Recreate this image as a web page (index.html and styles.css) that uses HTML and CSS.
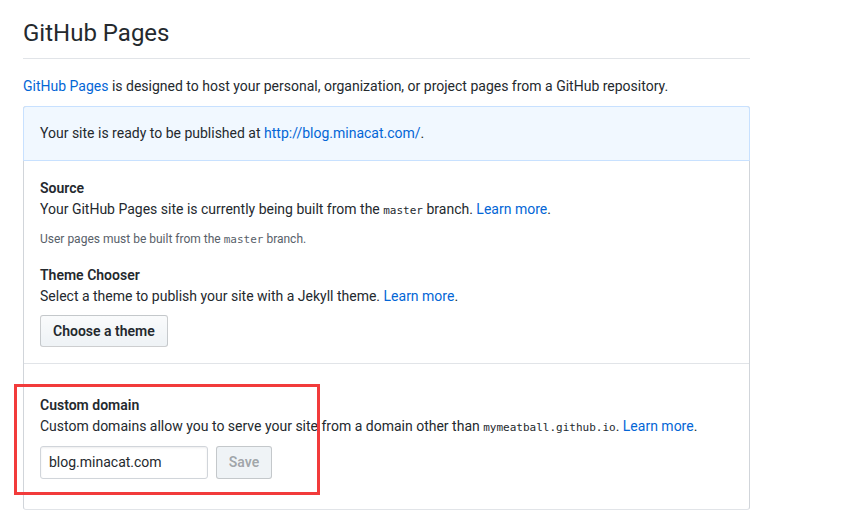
FILE: index.html
```html
<!DOCTYPE html>
<html>
<head>
<meta charset="utf-8">
<link rel="stylesheet" href="styles.css">
</head>
<body>
<div class="page">
  <div class="subhead">
    <h2 class="subhead-title">GitHub Pages</h2>
  </div>
  <p class="intro"><a href="#">GitHub Pages</a> is designed to host your personal, organization, or project pages from a GitHub repository.</p>
  <div class="box">
    <div class="flash">Your site is ready to be published at <a href="#">http://blog.minacat.com/</a>.</div>
    <div class="row">
      <h4 class="label">Source</h4>
      <p class="desc">Your GitHub Pages site is currently being built from the <code>master</code> branch. <a href="#">Learn more</a>.</p>
      <p class="note">User pages must be built from the <code>master</code> branch.</p>
      <h4 class="label label-theme">Theme Chooser</h4>
      <p class="desc">Select a theme to publish your site with a Jekyll theme. <a href="#">Learn more</a>.</p>
      <button class="btn">Choose a theme</button>
    </div>
    <div class="row row-domain">
      <div class="highlight"></div>
      <h4 class="label">Custom domain</h4>
      <p class="desc">Custom domains allow you to serve your site from a domain other than <code>mymeatball.github.io</code>. <a href="#">Learn more</a>.</p>
      <div class="form">
        <input class="input" type="text" value="blog.minacat.com">
        <button class="btn btn-save" disabled>Save</button>
      </div>
    </div>
  </div>
</div>
</body>
</html>
```

FILE: styles.css
```css
* { box-sizing: border-box; }
html, body { margin: 0; padding: 0; background: #fff; }
body {
  font-family: "Segoe UI", Roboto, "Noto Sans", sans-serif;
  font-size: 14px;
  line-height: 1.5;
  color: #24292e;
}
a { color: #0366d6; text-decoration: none; }
code {
  font-family: "DejaVu Sans Mono", "Liberation Mono", monospace;
  font-size: 11px;
}
.page {
  width: 727px;
  margin-left: 23px;
  padding-top: 16px;
}
.subhead {
  border-bottom: 1px solid #e1e4e8;
  padding-bottom: 8px;
}
.subhead-title {
  margin: 0;
  font-size: 24px;
  font-weight: 400;
  line-height: 34px;
}
.intro { margin: 17px 0 9px 0; }
.box {
  border: 1px solid #d1d5da;
  border-radius: 3px;
  border-bottom: 1px solid #e1e4e8;
}
.flash {
  background: #f1f8ff;
  border: 1px solid #c8e1ff;
  margin: -1px -1px 0 -1px;
  border-radius: 3px 3px 0 0;
  padding: 16px 16px;
  line-height: 21px;
}
.row {
  padding: 17px 16px 16px 16px;
  border-top: 1px solid #e1e4e8;
  position: relative;
}
.flash + .row { border-top: 0; }
.label {
  margin: 0;
  font-size: 14px;
  font-weight: 600;
  line-height: 21px;
}
.desc { margin: 0; }
.note {
  margin: 10px 0 0 0;
  font-size: 12px;
  color: #586069;
}
.label-theme { margin-top: 16px; }
.btn {
  margin-top: 8px;
  font-family: inherit;
  font-size: 14px;
  font-weight: 600;
  color: #24292e;
  background: linear-gradient(#fafbfc, #eff3f6 90%);
  border: 1px solid rgba(27,31,35,0.2);
  border-radius: 3px;
  padding: 0 12px;
  height: 32px;
  line-height: 20px;
}
.row-domain { padding-top: 31px; padding-bottom: 30px; }
.form { display: flex; gap: 8px; margin-top: 9px; }
.input {
  width: 168px;
  height: 33px;
  font-family: inherit;
  font-size: 14px;
  color: #24292e;
  border: 1px solid #d1d5da;
  border-radius: 3px;
  padding: 0 8px;
  box-shadow: inset 0 1px 2px rgba(27,31,35,0.075);
}
.btn-save {
  margin-top: 0;
  color: rgba(36,41,46,0.4);
  background: #eff3f6;
  border-color: rgba(27,31,35,0.2);
  width: 56px;
  height: 33px;
  padding: 0;
}
.highlight {
  position: absolute;
  left: -10px;
  top: 20px;
  width: 306px;
  height: 111px;
  border: 3px solid #f23b3b;
  pointer-events: none;
}
```
